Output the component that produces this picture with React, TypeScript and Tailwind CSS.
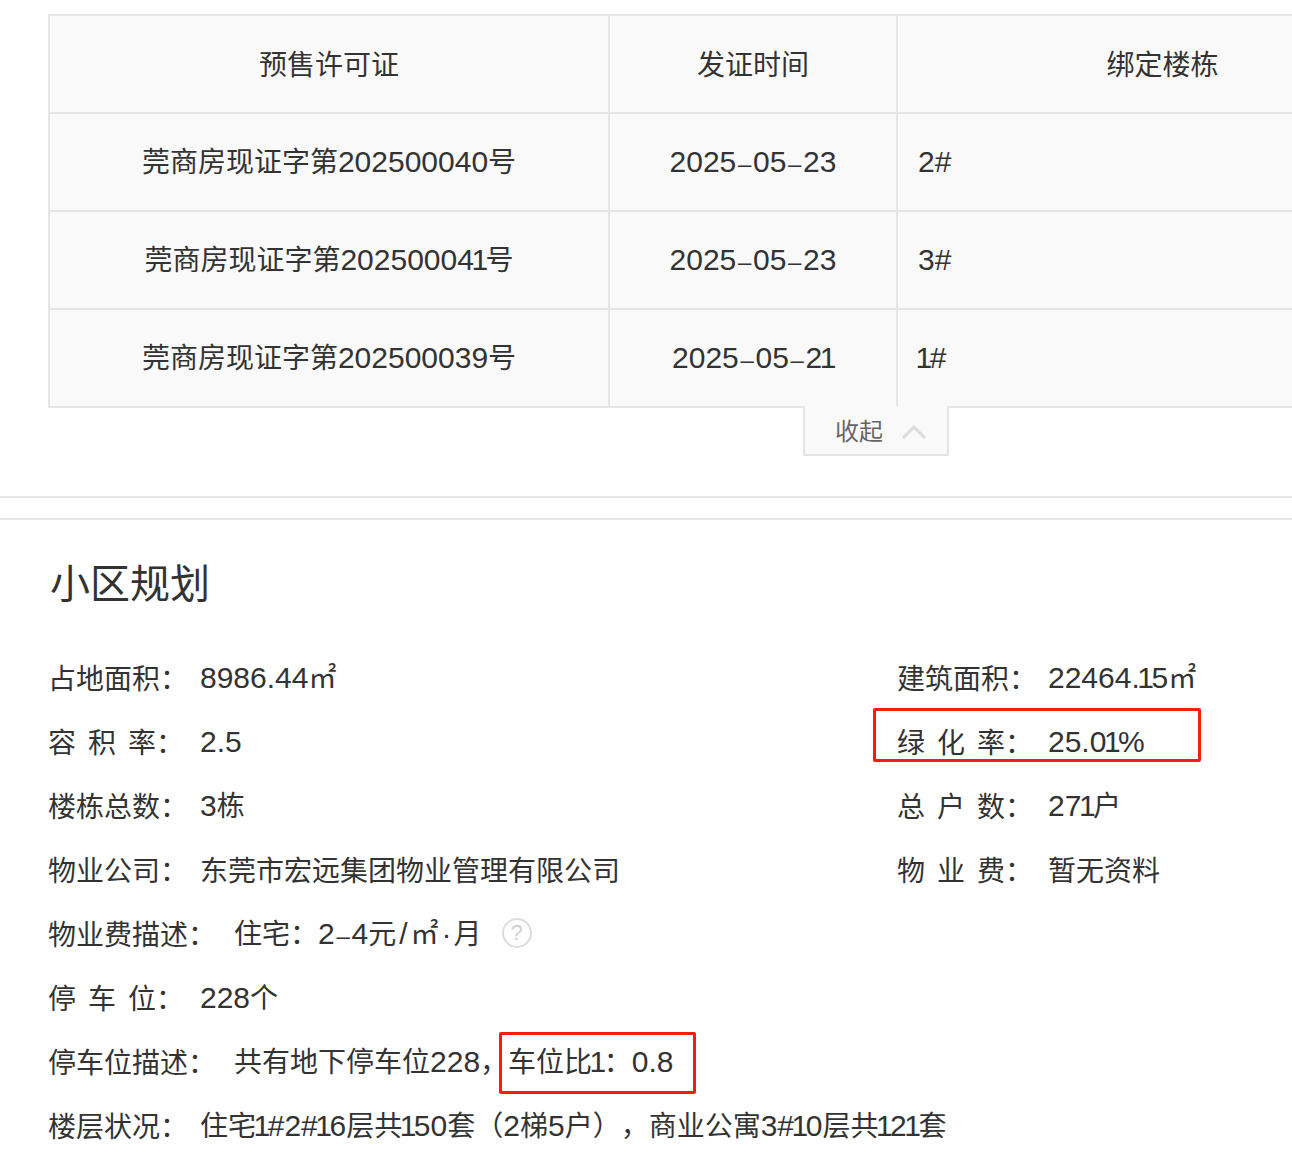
// CJK glyphs run at 28px, latin digits look closer at 30px
function Latin({ text }: { text: string }) {
  const bits = text.split(/(1|\/|·|–)/).filter(Boolean)
  return (
    <span className="font-['Liberation_Sans',sans-serif] text-[30px]">
      {bits.map((bit, i) => {
        if (bit === "1") return <span key={i} className="-mx-[2.5px]">1</span>
        if (bit === "/") return <span key={i} className="pl-[3px] pr-[3px]">/</span>
        if (bit === "·") return <span key={i} className="pl-[3px] pr-[2px]">·</span>
        if (bit === "–") return <span key={i} className="px-[1.7px] text-[24px]">–</span>
        return <span key={i}>{bit}</span>
      })}
    </span>
  )
}

function T({ text }: { text: string }) {
  const parts = text.split(/([\u0020-\u00ff\u2013]+)/).filter(Boolean)
  return (
    <span className="whitespace-nowrap [text-spacing-trim:space-all]">
      {parts.map((part, i) =>
        /^[\u0020-\u00ff\u2013]+$/.test(part) ? (
          <Latin key={i} text={part} />
        ) : (
          <span key={i} className="font-['Noto_Sans_CJK_SC',sans-serif] text-[28px]">
            {part}
          </span>
        ),
      )}
    </span>
  )
}

const certs = [
  { no: "莞商房现证字第202500040号", date: "2025–05–23", building: "2#" },
  { no: "莞商房现证字第202500041号", date: "2025–05–23", building: "3#" },
  { no: "莞商房现证字第202500039号", date: "2025–05–21", building: "1#" },
]

function Label({ text, spaced }: { text: string; spaced?: boolean }) {
  if (spaced) {
    return (
      <span className="font-['Noto_Sans_CJK_SC',sans-serif] text-[28px] whitespace-nowrap">
        <span className="tracking-[12px]">{text.slice(0, -2)}</span>
        {text.slice(-2)}
      </span>
    )
  }
  return <span className="font-['Noto_Sans_CJK_SC',sans-serif] text-[28px] whitespace-nowrap">{text}</span>
}

export default function App() {
  return (
    <div className="w-[1292px] h-[1160px] overflow-hidden bg-white text-[#333] font-['Noto_Sans_CJK_SC','Liberation_Sans',sans-serif]">
      {/* Certificates table */}
      <div className="pt-[14px] pl-[48px]">
        <table className="w-[1381px] table-fixed border-collapse border-2 border-[#e5e5e5] bg-[#f9f9f9] text-[28px]">
          <thead>
            <tr className="h-[98px]">
              <th className="w-[560px] border-2 border-[#e5e5e5] pb-[2px] font-normal"><T text="预售许可证" /></th>
              <th className="w-[288px] border-2 border-[#e5e5e5] pb-[2px] font-normal"><T text="发证时间" /></th>
              <th className="border-2 border-[#e5e5e5] pb-[2px] font-normal"><T text="绑定楼栋" /></th>
            </tr>
          </thead>
          <tbody>
            {certs.map((c) => (
              <tr key={c.no} className="h-[98px]">
                <td className="border-2 border-[#e5e5e5] pb-[2px] text-center"><T text={c.no} /></td>
                <td className="border-2 border-[#e5e5e5] pb-[2px] text-center"><T text={c.date} /></td>
                <td className="border-2 border-[#e5e5e5] pb-[2px] pl-[20px]"><T text={c.building} /></td>
              </tr>
            ))}
          </tbody>
        </table>
      </div>

      {/* Collapse tab */}
      <div className="relative z-10 -mt-[2px] ml-[803px] flex h-[50px] w-[146px] items-center border-x-2 border-b-2 border-[#e5e5e5] bg-[#f9f9f9] pl-[30px] text-[#666]">
        <span className="font-['Noto_Sans_CJK_SC',sans-serif] text-[24px] leading-none">收起</span>
        <svg className="ml-[19px] mt-[4px]" width="24" height="14" viewBox="0 0 24 14" fill="none">
          <path d="M1 13 L12 2 L23 13" stroke="#dcdcdc" strokeWidth="3" />
        </svg>
      </div>

      <div className="mt-[40px] h-[2px] bg-[#e5e5e5]" />
      <div className="mt-[20px] h-[2px] bg-[#e5e5e5]" />

      {/* Community planning */}
      <h2 className="mt-[34px] ml-[50px] font-['Noto_Sans_CJK_SC',sans-serif] text-[40px] leading-[54px] font-normal">小区规划</h2>

      <div className="mt-[37px] ml-[48px]">
        <div className="flex h-[64px] items-center">
          <div className="flex w-[849px] items-center">
            <div className="w-[152px]"><Label text="占地面积：" /></div>
            <T text="8986.44㎡" />
          </div>
          <div className="flex items-center">
            <div className="w-[151px]"><Label text="建筑面积：" /></div>
            <T text="22464.15㎡" />
          </div>
        </div>

        <div className="flex h-[64px] items-center">
          <div className="flex w-[849px] items-center">
            <div className="w-[152px]"><Label text="容积率：" spaced /></div>
            <T text="2.5" />
          </div>
          <div className="relative flex items-center">
            <div className="w-[151px]"><Label text="绿化率：" spaced /></div>
            <T text="25.01%" />
            <div className="absolute left-[-24px] top-[-11px] h-[54px] w-[328px] rounded-[2px] border-[3px] border-[#fb1a0e]" />
          </div>
        </div>

        <div className="flex h-[64px] items-center">
          <div className="flex w-[849px] items-center">
            <div className="w-[152px]"><Label text="楼栋总数：" /></div>
            <T text="3栋" />
          </div>
          <div className="flex items-center">
            <div className="w-[151px]"><Label text="总户数：" spaced /></div>
            <T text="271户" />
          </div>
        </div>

        <div className="flex h-[64px] items-center">
          <div className="flex w-[849px] items-center">
            <div className="w-[152px]"><Label text="物业公司：" /></div>
            <T text="东莞市宏远集团物业管理有限公司" />
          </div>
          <div className="flex items-center">
            <div className="w-[151px]"><Label text="物业费：" spaced /></div>
            <T text="暂无资料" />
          </div>
        </div>

        <div className="flex h-[64px] items-center">
          <div className="w-[186px]"><Label text="物业费描述：" /></div>
          <T text="住宅：2–4元/㎡·月" />
          <span className="ml-[20px] flex h-[30px] w-[30px] items-center justify-center rounded-full border-2 border-[#dcdcdc] font-['Liberation_Sans',sans-serif] text-[22px] leading-none text-[#d0d0d0]">?</span>
        </div>

        <div className="flex h-[64px] items-center">
          <div className="w-[152px]"><Label text="停车位：" spaced /></div>
          <T text="228个" />
        </div>

        <div className="flex h-[64px] items-center">
          <div className="w-[186px]"><Label text="停车位描述：" /></div>
          <T text="共有地下停车位228，" />
          <div className="relative">
            <T text="车位比1：0.8" />
            <div className="absolute left-[-9px] top-[-7px] h-[62px] w-[197px] rounded-[2px] border-[3px] border-[#fb1a0e]" />
          </div>
        </div>

        <div className="flex h-[64px] items-center">
          <div className="w-[152px]"><Label text="楼层状况：" /></div>
          <T text="住宅1#2#16层共150套（2梯5户），商业公寓3#10层共121套" />
        </div>
      </div>
    </div>
  )
}
